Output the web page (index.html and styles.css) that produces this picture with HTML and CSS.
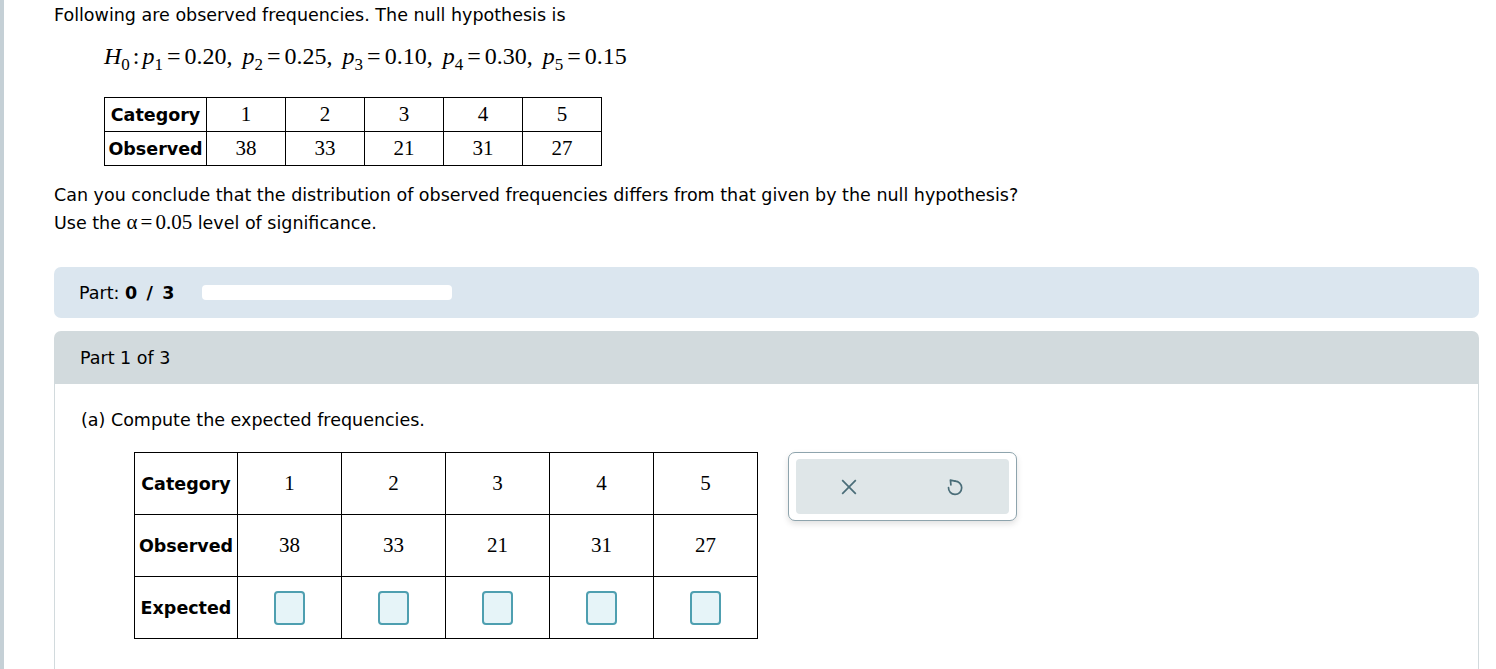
FILE: index.html
```html
<!DOCTYPE html>
<html>
<head>
<meta charset="utf-8">
<link rel="stylesheet" href="styles.css">
</head>
<body>
<div class="page">
  <div class="content">
    <p class="intro">Following are observed frequencies. The null hypothesis is</p>
    <div class="formula"><i>H</i><sub>0</sub><span class="colon">:</span><i>p</i><sub>1</sub><span class="eq">=</span>0.20<span class="comma">,</span><i>p</i><sub>2</sub><span class="eq">=</span>0.25<span class="comma">,</span><i>p</i><sub>3</sub><span class="eq">=</span>0.10<span class="comma">,</span><i>p</i><sub>4</sub><span class="eq">=</span>0.30<span class="comma">,</span><i>p</i><sub>5</sub><span class="eq">=</span>0.15</div>
    <table class="data small">
      <tr><th>Category</th><td>1</td><td>2</td><td>3</td><td>4</td><td>5</td></tr>
      <tr><th>Observed</th><td>38</td><td>33</td><td>21</td><td>31</td><td>27</td></tr>
    </table>
    <p class="question">Can you conclude that the distribution of observed frequencies differs from that given by the null hypothesis?<br>Use the <span class="math">α<span class="eq">=</span>0.05</span> level of significance.</p>

    <div class="progress">
      <span class="plabel">Part: <b>0 / 3</b></span>
      <span class="pbar"></span>
    </div>

    <div class="panel">
      <div class="panel-head">Part 1 of 3</div>
      <div class="panel-body">
        <p class="task">(a) Compute the expected frequencies.</p>
        <div class="work">
          <table class="data big">
            <tr><th>Category</th><td>1</td><td>2</td><td>3</td><td>4</td><td>5</td></tr>
            <tr><th>Observed</th><td>38</td><td>33</td><td>21</td><td>31</td><td>27</td></tr>
            <tr><th>Expected</th><td><span class="box"></span></td><td><span class="box"></span></td><td><span class="box"></span></td><td><span class="box"></span></td><td><span class="box"></span></td></tr>
          </table>
          <div class="actions">
            <div class="actions-inner">
              <svg class="icon" width="16" height="16" viewBox="0 0 16 16"><path d="M1.2 1.2 L14.8 14.8 M14.8 1.2 L1.2 14.8" stroke="#4a6d78" stroke-width="1.7" fill="none"/></svg>
              <svg class="icon" width="20" height="22" viewBox="0 0 20 22"><path d="M10 5.2 A6.6 6.6 0 1 1 3.5 11.5" stroke="#4a6d78" stroke-width="1.7" fill="none" stroke-linecap="round"/><path d="M10 5.2 L5.4 4.2 M5.4 4.2 L5.9 8.8" stroke="#4a6d78" stroke-width="1.7" fill="none" stroke-linecap="round" stroke-linejoin="round"/></svg>
            </div>
          </div>
        </div>
      </div>
    </div>
  </div>
</div>
</body>
</html>
```
FILE: styles.css
```css
html, body {
  margin: 0;
  padding: 0;
  background: #fff;
}
body {
  font-family: "DejaVu Sans", Verdana, sans-serif;
  font-size: 17.5px;
  color: #000;
}
.page {
  border-left: 4px solid #c5d0d6;
  min-height: 669px;
  box-sizing: border-box;
}
.content {
  padding-left: 50px;
  padding-right: 17px;
  padding-top: 5px;
}
.intro {
  margin: 0;
  line-height: 21px;
}
.formula {
  font-family: "Liberation Serif", "Times New Roman", serif;
  font-size: 24px;
  margin: 16px 0 0 50px;
  line-height: 28px;
}
.formula sub, .math sub {
  font-size: 17px;
  vertical-align: -6px;
  line-height: 0;
}
.formula .eq, .math .eq {
  margin: 0 4px;
}
.math .eq {
  margin: 0 3px;
}
.formula .comma {
  margin-right: 10px;
}
.formula .colon {
  margin: 0 3px;
}
table.data {
  border-collapse: collapse;
}
table.data th {
  font-family: "DejaVu Sans", Verdana, sans-serif;
  font-weight: bold;
  font-size: 17.5px;
  border: 1px solid #000;
  padding: 0 3px;
  text-align: center;
}
table.data td {
  font-family: "Liberation Serif", "Times New Roman", serif;
  font-size: 21px;
  border: 1px solid #000;
  text-align: center;
  padding: 0;
}
table.small {
  margin: 27px 0 0 50px;
}
table.small th { height: 33px; width: 95px; }
table.small td { width: 78px; }
.question {
  margin: 16px 0 0 0;
  line-height: 27px;
}
.math {
  font-family: "Liberation Serif", "Times New Roman", serif;
  font-size: 21px;
}
.progress {
  margin-top: 30px;
  height: 51px;
  background: #dbe6ef;
  border-radius: 7px;
  display: flex;
  align-items: center;
  padding-left: 25px;
}
.plabel {
  width: 123px;
}
.plabel b {
  letter-spacing: 1.6px;
}
.pbar {
  width: 250px;
  height: 15px;
  background: #fff;
  border-radius: 4px;
}
.panel {
  margin-top: 13px;
}
.panel-head {
  background: #d2dadd;
  height: 53px;
  border-radius: 7px 7px 0 0;
  display: flex;
  align-items: center;
  padding-left: 26px;
}
.panel-body {
  border-left: 1px solid #d2dadd;
  border-right: 1px solid #d2dadd;
  padding: 26px 0 40px 26px;
}
.task {
  margin: 0;
  line-height: 21px;
}
.work {
  display: flex;
  align-items: flex-start;
  margin-top: 21px;
  margin-left: 53px;
  gap: 30px;
}
table.big th {
  height: 61px;
  width: 96px;
  padding: 0 3px;
}
table.big td {
  width: 103px;
}
.box {
  display: inline-block;
  width: 27px;
  height: 30px;
  background: #e6f4f8;
  border: 2px solid #4e9fb0;
  border-radius: 4px;
  vertical-align: middle;
}
.actions {
  width: 229px;
  height: 69px;
  box-sizing: border-box;
  border: 1px solid #8ea4ad;
  border-radius: 7px;
  background: #fff;
  padding: 6px 7px;
  box-shadow: 0 3px 6px rgba(0,0,0,0.12);
}
.actions-inner {
  height: 55px;
  background: #dfe6e8;
  border-radius: 4px;
  display: flex;
  align-items: center;
  justify-content: space-between;
  padding: 0 44px 0 45px;
}
.icon { display: block; }
```
